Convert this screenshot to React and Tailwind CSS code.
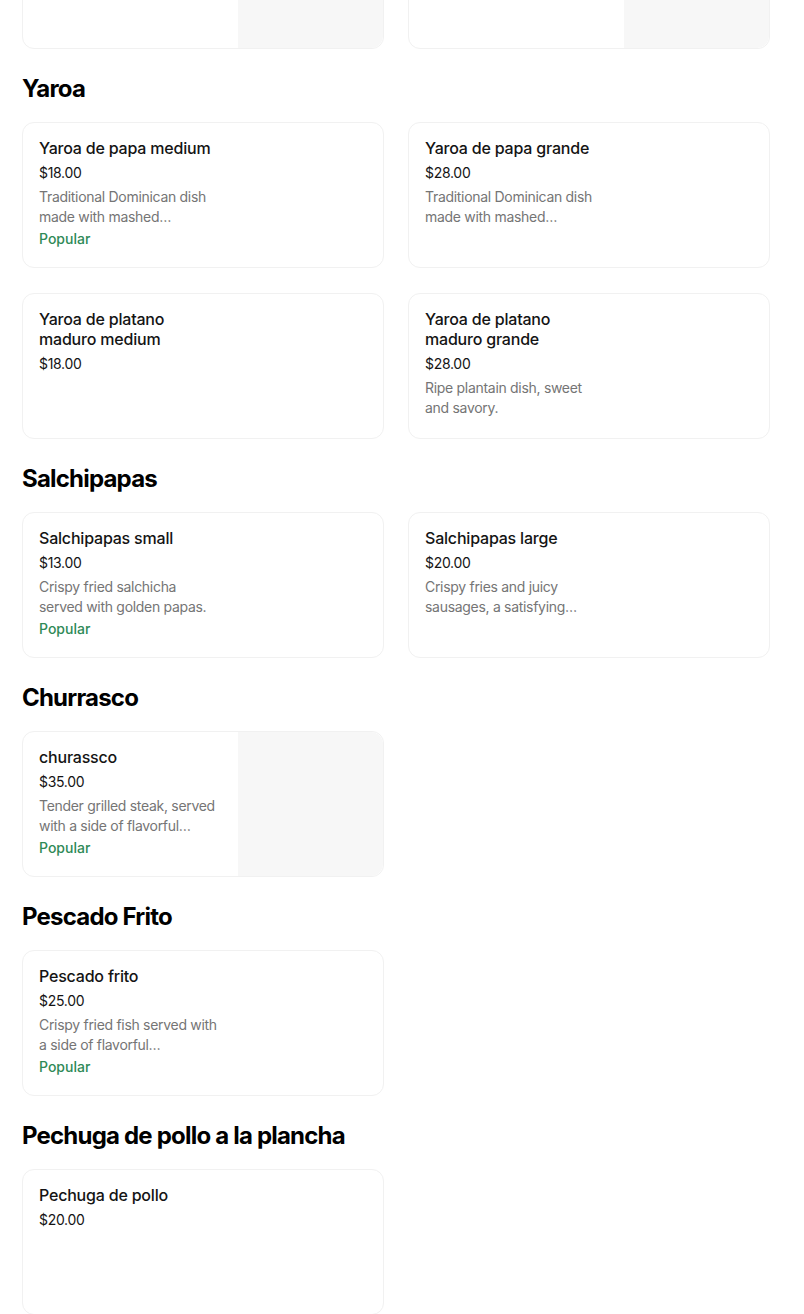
import React from "react";

const sections = [
  {
    title: "Yaroa",
    items: [
      { name: "Yaroa de papa medium", price: "$18.00", desc: "Traditional Dominican dish made with mashed…", popular: true },
      { name: "Yaroa de papa grande", price: "$28.00", desc: "Traditional Dominican dish made with mashed…" },
      { name: "Yaroa de platano maduro medium", price: "$18.00" },
      { name: "Yaroa de platano maduro grande", price: "$28.00", desc: "Ripe plantain dish, sweet and savory." },
    ],
  },
  {
    title: "Salchipapas",
    items: [
      { name: "Salchipapas small", price: "$13.00", desc: "Crispy fried salchicha served with golden papas.", popular: true },
      { name: "Salchipapas large", price: "$20.00", desc: "Crispy fries and juicy sausages, a satisfying…" },
    ],
  },
  {
    title: "Churrasco",
    items: [
      { name: "churassco", price: "$35.00", desc: "Tender grilled steak, served with a side of flavorful…", popular: true, image: true },
    ],
  },
  {
    title: "Pescado Frito",
    items: [
      { name: "Pescado frito", price: "$25.00", desc: "Crispy fried fish served with a side of flavorful…", popular: true },
    ],
  },
  {
    title: "Pechuga de pollo a la plancha",
    items: [{ name: "Pechuga de pollo", price: "$20.00" }],
  },
];

function Card({ item }) {
  return (
    <div className="flex h-[146px] rounded-xl border border-[#f1f1f1] bg-white overflow-hidden">
      <div className="w-[215px] shrink-0 pl-4 pr-4 pt-[15px]">
        {item.name && (
          <div className="text-[16px] leading-5 font-medium tracking-[-0.2px] text-[#141414]">{item.name}</div>
        )}
        {item.price && (
          <div className="mt-[5px] text-[14px] leading-5 tracking-[-0.3px] text-[#141414]">{item.price}</div>
        )}
        {item.desc && (
          <div className="mt-1 text-[14px] leading-5 tracking-[-0.3px] text-[#757575]">{item.desc}</div>
        )}
        {item.popular && (
          <div className="mt-[2px] text-[14px] leading-5 font-medium text-[#2f8a57]">Popular</div>
        )}
      </div>
      <div className="flex-1" />
      {item.image && <div className="w-[145px] shrink-0 bg-[#f7f7f7] rounded-r-xl" />}
    </div>
  );
}

export default function App() {
  return (
    <div className="min-h-screen bg-white px-[22px] overflow-hidden" style={{ fontFamily: "Inter, 'Noto Sans', sans-serif" }}>
      <div className="grid grid-cols-2 w-[748px] gap-x-6 -mt-[97px]">
        <Card item={{ image: true }} />
        <Card item={{ image: true }} />
      </div>
      {sections.map((s) => (
        <section key={s.title}>
          <h2 className="mt-6 mb-[17px] text-[24px] leading-8 font-bold tracking-[-0.8px] text-black">{s.title}</h2>
          <div className="grid grid-cols-2 w-[748px] gap-x-6 gap-y-[25px]">
            {s.items.map((it) => (
              <Card key={it.name} item={it} />
            ))}
          </div>
        </section>
      ))}
    </div>
  );
}
